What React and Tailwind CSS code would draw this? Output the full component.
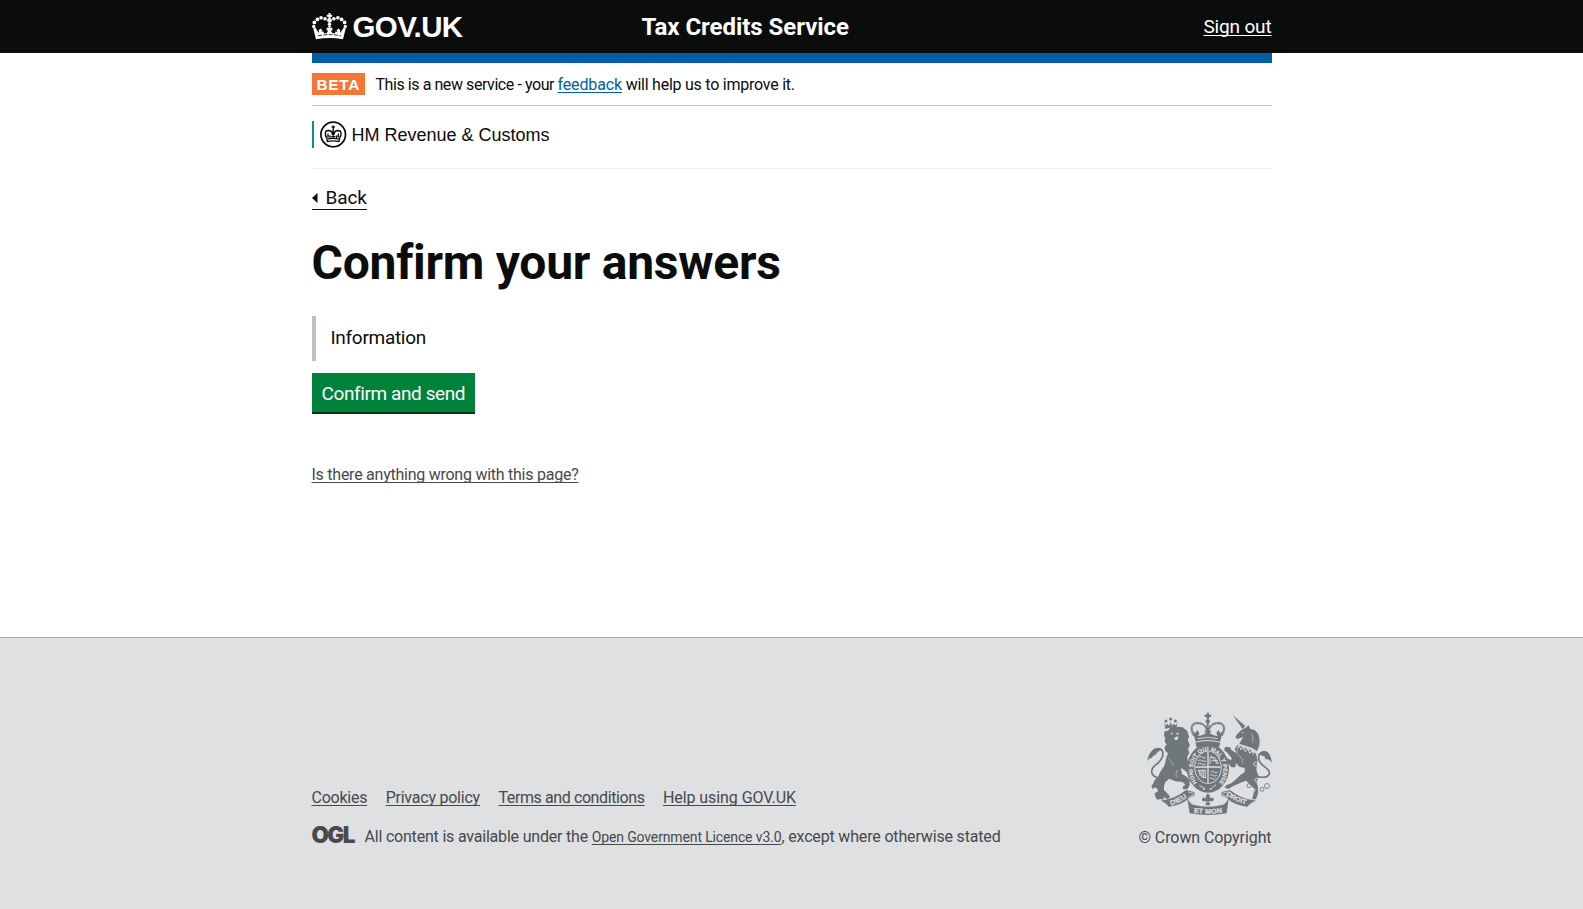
import React from 'react';

const INK = '#6f777b';
const PAPER = '#dee0e2';

function Crown({ className, fill = '#fff' }) {
  return (
    <svg className={className} viewBox="36 38 104 80" fill={fill}>
      <path d="M85 38h6v5h5v6h-5v6h-6v-6h-5v-6h5z" />
      <circle cx="88" cy="60" r="7" />
      <circle cx="88" cy="71" r="5" />
      <circle cx="75" cy="55" r="5.500" />
      <circle cx="101" cy="55" r="5.500" />
      <circle cx="63" cy="52" r="5.500" />
      <circle cx="113" cy="52" r="5.500" />
      <circle cx="52" cy="57" r="5.500" />
      <circle cx="124" cy="57" r="5.500" />
      <circle cx="43" cy="66" r="5.500" />
      <circle cx="133" cy="66" r="5.500" />
      <circle cx="41" cy="78" r="5" />
      <circle cx="135" cy="78" r="5" />
      <path d="M40 84 L46 81 L52 91 L57 97 L56 89 L61 84 L67 89 L64 95 L70 92 L72 99 L80 97 L84 90 L79 89 L80 81 L86 83 L83 76 H93 L90 83 L96 81 L97 89 L92 90 L96 97 L104 99 L106 92 L112 95 L109 89 L115 84 L120 89 L119 97 L124 91 L130 81 L136 84 L131 105 L128 116 Q88 109 48 116 L45 105 Z" />
      <path d="M54 106Q88 98 122 106" fill="none" stroke="#0b0c0c" strokeWidth="2.500" strokeDasharray="12 4" />
    </svg>
  );
}

function HmrcCrest() {
  return (
    <svg className="h-[27px] w-[27px]" viewBox="0 0 27 27" fill="none" stroke="#0b0c0c">
      <circle cx="13.200" cy="13.500" r="12.300" strokeWidth="1.700" />
      <path d="M13.200 4.500v4.500M11.600 6h3.200" strokeWidth="1.400" />
      <path d="M13.200 9v5M6.900 17.500C4.300 13.200 5 9.600 8.100 9.500c2.500 0 4.400 1.600 4.400 4.500M19.500 17.500c2.600-4.300 1.900-7.900-1.200-8-2.500 0-4.400 1.600-4.400 4.500" strokeWidth="1.400" />
      <path d="M8 12.500v4M10 14.500v3M13.200 14v3.500M16.400 14.500v3M18.400 12.500v4M11.200 15.700h4M7.200 15h2.500M16.700 15h2.500" strokeWidth="1.200" />
      <path d="M6.900 18.200q6.300-1.700 12.600 0M7.300 20.600q5.900-1.600 11.800 0M6.900 17.500l.5 3.400M19.500 17.500l-.5 3.400" strokeWidth="1.300" />
    </svg>
  );
}

function RoyalArms() {
  return (
    <svg className="block h-[104px] w-[127px]" viewBox="78 36 381 312" fill={INK} fontFamily="'Liberation Sans', sans-serif" fontWeight="700">
      {/* lion */}
      <g>
        <circle cx="152" cy="57" r="4.500" />
        <circle cx="138" cy="63" r="4.500" />
        <circle cx="166" cy="63" r="4.500" />
        <path d="M132 66l5 11 5-6 6 6 4-12 4 12 7-6 4 6 6-11-4 19q-16-5-33 2z" />
        <path d="M134 94 L144 92 L150 84 L172 80 L188 82 L202 93 L207 110 L203 120 L210 136 L204 146 L208 158 L202 170 L203 184 L213 192 L218 206 L208 212 L200 200 L190 198 L183 204 L186 222 L200 230 L209 240 L209 256 L202 268 L190 268 L188 260 L196 254 L188 246 L166 244 L148 236 L136 246 L132 258 L132 270 L142 280 L150 290 L144 298 L132 292 L130 299 L120 297 L112 299 L106 290 L104 280 L114 274 L112 266 L104 262 L98 268 L94 258 L100 250 L104 240 L114 230 L122 214 L134 196 L138 176 L144 160 L136 152 L133 142 L140 134 L134 124 L136 116 L132 106 Z" />
        <path d="M176 198 L194 186 L210 200 L214 232 L208 236 L200 216 Z" />
        <path d="M122 236C90 228 88 210 108 194 C132 176 136 150 116 146 C104 144 94 154 92 168" fill="none" stroke={INK} strokeWidth="5" />
        <path d="M82 184 Q84 158 104 148 Q118 140 126 148 Q110 156 106 166 Q98 164 96 174 Q88 172 82 184Z" />
        <path d="M152 100l8-2-4 6zM168 98l10 2-6 5zM163 113l12-5-2 11-8 2z" fill={PAPER} />
        <path d="M146 176q12 8 14 22M172 210q-8 14 0 22" fill="none" stroke={PAPER} strokeWidth="1.500" />
      </g>

      {/* unicorn */}
      <g>
        <path d="M338 45 L376 78 L368 87 Z" />
        <path d="M386 76 L390 86 L404 90 L415 102 L419 120 L418 136 L411 154 L396 144 L376 137 L358 132 L364 120 L370 112 L360 114 L352 118 L346 110 L352 102 L364 90 L376 84 Z" />
        <path d="M354 134 L372 140 L392 148 L408 160 L413 184 L409 210 L416 230 L410 248 L414 262 L414 280 L408 298 L396 298 L400 284 L402 268 L392 254 L378 242 L362 248 L340 258 L326 266 L314 264 L318 256 L334 250 L350 236 L360 226 L374 216 L374 204 L358 200 L348 190 L346 202 L334 202 L324 188 L314 182 L320 174 L332 180 L336 176 L322 158 L312 150 L316 140 L330 142 L334 150 L350 160 L344 146 Z" />
        <path d="M354 130q10 10 24 14 14 3 28 16" fill="none" stroke={PAPER} strokeWidth="3" />
        <path d="M352 146l5-10 7 14 6-9 6 14 8-9 5 14 8-8 3 12" fill="none" stroke={PAPER} strokeWidth="3" />
        <path d="M364 97l6-1-2 5z" fill={PAPER} />
        <path d="M394 100q8 12 4 28" fill="none" stroke={PAPER} strokeWidth="1.500" />
        <path d="M412 230 C452 238 456 216 436 202 C414 188 410 166 424 158 C438 152 448 162 450 178" fill="none" stroke={INK} strokeWidth="5" />
        <path d="M416 162 Q428 148 442 156 Q452 164 456 188 Q446 174 436 178 Q436 166 428 168Z" />
        <path d="M352 150q-6 12 6 18 14 10 10 22" fill="none" stroke={PAPER} strokeWidth="1.500" />
      </g>
      <g fill="none" stroke={INK} strokeWidth="2.500">
        <circle cx="387" cy="257" r="6" />
        <circle cx="400" cy="270" r="5" stroke={PAPER} />
        <circle cx="426" cy="268" r="6" />
        <circle cx="441" cy="258" r="7.500" />
        <circle cx="407" cy="192" r="6" stroke={PAPER} />
        <circle cx="410" cy="240" r="5" stroke={PAPER} />
      </g>

      {/* crown */}
      <path d="M260 38h7v6h6v7h-6v7h-7v-7h-6v-7h6z" />
      <circle cx="263.500" cy="64" r="6.500" />
      <path d="M263 70V100M222 106C204 76 224 66 240 70 C254 74 260 82 260 92M305 106C323 76 303 66 287 70 C273 74 267 82 267 92" fill="none" stroke={INK} strokeWidth="6.500" strokeDasharray="5.500 1.200" />
      <path d="M218 92l8 8 6-10 6 10-4 8 12-2 12-6-6-8h8v-8h7v8h8l-6 8 12 6 12 2-4-8 6-10 6 10 8-8-9 33q-37-10-73 0z" />
      <path d="M232 116q31-8 62 0" fill="none" stroke={PAPER} strokeWidth="2.500" />
      <path d="M226 128q37-10 75 0l-4 14h-67z" />

      {/* garter and shield */}
      <ellipse cx="264" cy="205" rx="63" ry="73" />
      <ellipse cx="264" cy="202" rx="41" ry="50" fill={PAPER} />
      <ellipse cx="264" cy="202" rx="38.500" ry="47.500" />
      <path id="garter" d="M234 251 A46 56 0 1 1 294 251" fill="none" />
      <text fontSize="17" fill={PAPER} stroke={PAPER} strokeWidth="0.500" textLength="246" lengthAdjust="spacing">
        <textPath href="#garter" startOffset="4">HONI SOIT QUI MAL Y PENSE</textPath>
      </text>
      <path d="M264 155V249M226 201H302" stroke={PAPER} strokeWidth="4" />
      <g fill="none" stroke={PAPER} strokeWidth="2.800">
        <path d="M238 172q6-5 10 0t10 0M234 182q6-5 12 0t12 0M233 192q6-5 12 0t12 0" />
        <path d="M272 216q6-5 10 0t10 0M271 226q5-5 9 0t10 0M270 236q5-4 8 0t8 0" />
        <path d="M272 166l20 26M270 192V172h14l12 20M275 182h18" />
        <path d="M234 212l22-2v24q-12-2-22-22M240 212v16M246 211v22M251 210v24" />
      </g>
      <circle cx="252" cy="267" r="3" fill={PAPER} />
      <circle cx="272" cy="267" r="3" fill={PAPER} />
      <path d="M238 256l16 10M288 254l-12 9" stroke={PAPER} strokeWidth="3" />

      {/* ribbon */}
      <path d="M122 302 Q164 298 198 270 L222 276 L226 288 L214 290 L206 296 Q182 316 146 320 Q136 306 122 302Z" />
      <path d="M408 302 Q364 298 330 270 L306 276 L302 288 L314 290 L322 296 Q346 316 382 320 Q392 306 408 302Z" />
      <path d="M202 296 Q212 306 220 314 Q264 326 308 314 Q318 306 326 296 L320 340 Q264 350 209 340Z" />
      <path d="M204 276q18 2 22 12-12-4-20 4 0 16 12 22M324 276q-18 2-22 12 12-4 20 4 0 16-12 22" fill="none" stroke={PAPER} strokeWidth="2.500" />
      <path id="dieu" d="M153 316 Q184 307 210 286" fill="none" />
      <path id="droit" d="M318 285 Q342 305 384 315" fill="none" />
      <path id="mon" d="M221 338 Q264 344 309 338" fill="none" />
      <g fontSize="21" fill={PAPER} stroke={PAPER} strokeWidth="0.500">
        <text><textPath href="#dieu" textLength="54" lengthAdjust="spacingAndGlyphs">DIEU</textPath></text>
        <text><textPath href="#droit" textLength="66" lengthAdjust="spacingAndGlyphs">DROIT</textPath></text>
        <text><textPath href="#mon" textLength="86" lengthAdjust="spacingAndGlyphs">ET MON</textPath></text>
      </g>
      <path d="M263.500 280q11 10 4 21 2-10 11-8 6 4 0 11h-10l2 12h-14l2-12h-10q-6-7 0-11 9-2 11 8-7-11 4-21z" />
      <path d="M254 306h19" stroke={PAPER} strokeWidth="2" />
    </svg>
  );
}

const LINK = 'underline decoration-1 underline-offset-[2px] [text-decoration-skip-ink:none]';

export default function App() {
  return (
    <div className="flex h-[909px] flex-col overflow-hidden bg-white font-['Roboto',sans-serif] text-[16px] leading-[20px] text-[#0b0c0c]">
      <header className="h-[53px] shrink-0 bg-[#0b0c0c] text-white">
        <div className="mx-auto grid h-full w-[960px] grid-cols-[330px_1fr_auto]">
          <a className="flex gap-[6px] pt-[11px]">
            <Crown className="mt-[2px] h-[27px] w-[35px]" />
            <span className="font-['Liberation_Sans',sans-serif] text-[29.500px] leading-[32px] font-bold tracking-[-0.600px]">GOV.UK</span>
          </a>
          <span className="pt-[12px] text-[24px] leading-[30px] font-bold tracking-[-0.050px]">Tax Credits Service</span>
          <a className={`${LINK} pt-[14px] text-[19px] leading-[25px] tracking-[-0.150px]`}>Sign out</a>
        </div>
      </header>

      <main className="mx-auto flex w-[960px] shrink-0 flex-col items-start">
        <div className="h-[10px] w-full bg-[#005ea5]" />
        <div className="flex h-[43px] w-full items-start border-b border-[#bfc1c3] pt-[10px]">
          <strong className="h-[22px] w-[53px] bg-[#f47738] pl-[5px] font-['Liberation_Sans',sans-serif] text-[15.500px] leading-[23px] tracking-[0.600px] text-white">BETA</strong>
          <span className="pt-[2px] pl-[11px] whitespace-pre">
            <span className="tracking-[-0.430px]">This is a new service - your </span>
            <a className={`${LINK} tracking-[-0.150px] text-[#005ea5]`}>feedback</a>
            <span className="tracking-[-0.240px]"> will help us to improve it.</span>
          </span>
        </div>
        <div className="h-[63px] w-full border-b border-[#eeeeee] pt-[15px]">
          <div className="flex h-[27px] items-center border-l-2 border-[#009390] pl-[6px] font-['Liberation_Sans',sans-serif] text-[18px]">
            <HmrcCrest />
            <span className="pl-[5px]">HM Revenue &amp; Customs</span>
          </div>
        </div>

        <a className="mt-[16px] flex h-[25px] items-center border-b border-[#0b0c0c] pt-[2px] text-[19px] tracking-[-0.100px]">
          <svg className="mr-[8px] h-[10px] w-[6px]" viewBox="0 0 6 10"><path d="M0 5L5.500 0v10z" fill="#0b0c0c" /></svg>
          Back
        </a>
        <h1 className="mt-[28px] text-[48px] leading-[50px] font-bold tracking-[-0.260px]">Confirm your answers</h1>
        <div className="mt-[28px] flex h-[45px] items-center border-l-4 border-[#bfc1c3] pb-[2px] pl-[15px] text-[19px] tracking-[-0.300px]">Information</div>
        <button className="mt-[12px] h-[41px] w-[163px] border-b-2 border-[#003618] bg-[#00823b] pt-[2px] pl-[10px] text-left text-[19px] tracking-[-0.400px] text-white">Confirm and send</button>
        <a className={`${LINK} mt-[51px] tracking-[-0.250px] text-[#47494b]`}>Is there anything wrong with this page?</a>
      </main>

      <footer className="mt-auto h-[272px] shrink-0 border-t border-[#a1acb2] bg-[#dee0e2] text-[#47494b]">
        <div className="mx-auto flex w-[960px] justify-between pt-[74px]">
          <div className="pt-[76px]">
            <nav className="flex gap-[18.500px]">
              <a className={`${LINK} tracking-[-0.250px]`}>Cookies</a>
              <a className={`${LINK} tracking-[-0.230px]`}>Privacy policy</a>
              <a className={`${LINK} tracking-[-0.400px]`}>Terms and conditions</a>
              <a className={`${LINK} tracking-[-0.080px]`}>Help using GOV.UK</a>
            </nav>
            <div className="mt-[19px] flex items-start">
              <span className="w-[53px] font-['Inter',sans-serif] text-[22.500px] leading-[16px] font-black tracking-[-1.600px]">OGL</span>
              <span className="whitespace-pre">
                <span className="tracking-[-0.200px]">All content is available under the </span>
                <a className={`${LINK} text-[14px] tracking-[-0.135px]`}>Open Government Licence v3.0</a>
                <span className="tracking-[-0.165px]">, except where otherwise stated</span>
              </span>
            </div>
          </div>
          <div className="flex flex-col items-end">
            <div className="-mr-px"><RoyalArms /></div>
            <span className="mt-[12px] tracking-[-0.090px]">© Crown Copyright</span>
          </div>
        </div>
      </footer>
    </div>
  );
}
